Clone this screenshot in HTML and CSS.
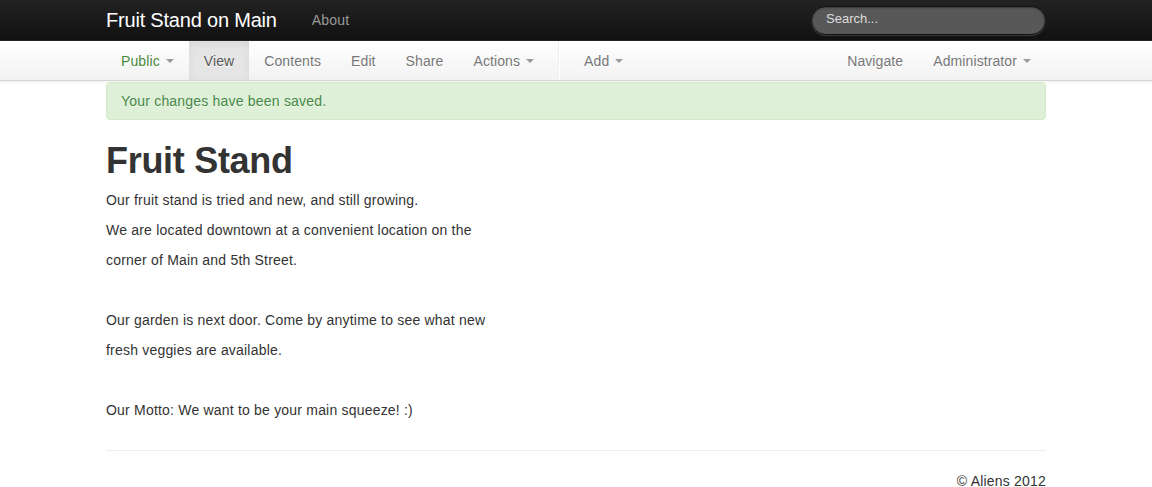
FILE: index.html
```html
<!DOCTYPE html>
<html lang="en">
<head>
<meta charset="utf-8">
<title>Fruit Stand</title>
<link rel="stylesheet" href="styles.css">
</head>
<body>
<div class="topbar">
  <div class="container topbar-row">
    <a class="brand" href="#">Fruit Stand on Main</a>
    <a class="top-link" href="#">About</a>
    <div class="spacer"></div>
    <input class="search" type="text" placeholder="Search...">
  </div>
</div>
<div class="subbar">
  <div class="container subbar-row">
    <ul class="nav">
      <li><a href="#" class="public">Public <b class="caret"></b></a></li>
      <li class="active"><a href="#">View</a></li>
      <li><a href="#">Contents</a></li>
      <li><a href="#">Edit</a></li>
      <li><a href="#">Share</a></li>
      <li><a href="#">Actions <b class="caret"></b></a></li>
      <li class="divider"></li>
      <li><a href="#">Add <b class="caret"></b></a></li>
    </ul>
    <ul class="nav nav-right">
      <li><a href="#">Navigate</a></li>
      <li><a href="#">Administrator <b class="caret"></b></a></li>
    </ul>
  </div>
</div>
<div class="container main">
  <div class="alert">Your changes have been saved.</div>
  <h1>Fruit Stand</h1>
  <div class="content">
    <p>Our fruit stand is tried and new, and still growing.<br>We are located downtown at a convenient location on the<br>corner of Main and 5th Street.</p>
    <p>Our garden is next door. Come by anytime to see what new<br>fresh veggies are available.</p>
    <p>Our Motto: We want to be your main squeeze! :)</p>
  </div>
  <hr class="rule">
  <footer class="footer">© Aliens 2012</footer>
</div>
</body>
</html>
```
FILE: styles.css
```css
* { box-sizing: border-box; }
html, body { margin: 0; padding: 0; }
body {
  font-family: "Liberation Sans", Arial, Helvetica, sans-serif;
  font-size: 14px;
  line-height: 20px;
  letter-spacing: 0.2px;
  color: #333;
  background: #fff;
  overflow: hidden;
}
a { text-decoration: none; }
.container { width: 940px; margin: 0 auto; }

.topbar {
  height: 41px;
  background: linear-gradient(#222, #111);
  border-bottom: 1px solid #252525;
}
.topbar-row { display: flex; align-items: flex-start; height: 40px; }
.brand {
  color: #fff;
  font-size: 20px;
  line-height: 20px;
  letter-spacing: -0.2px;
  padding: 10px 20px 10px 0;
}
.top-link { color: #999; font-size: 14px; padding: 10px 15px; }
.spacer { flex: 1; }
.search {
  width: 235px;
  height: 29px;
  margin-top: 6px;
  padding: 2px 14px 6px;
  border-radius: 15px;
  border: 1px solid #111;
  background: #585858;
  color: #ccc;
  font-family: "Liberation Sans", Arial, sans-serif;
  font-size: 13px;
  box-shadow: inset 0 1px 2px rgba(0,0,0,.35), 0 1px 0 rgba(255,255,255,.15);
  outline: none;
}
.search::placeholder { color: #ddd; }

.subbar {
  height: 40px;
  background: linear-gradient(#fff, #f2f2f2);
  border-bottom: 1px solid #d4d4d4;
  box-shadow: 0 1px 4px rgba(0,0,0,.07);
}
.subbar-row { display: flex; justify-content: space-between; height: 39px; }
.nav { list-style: none; margin: 0; padding: 0; display: flex; letter-spacing: 0.1px; }
.nav li a {
  display: block;
  padding: 10px 15px 9px;
  color: #777;
  text-shadow: 0 1px 0 #fff;
}
.nav li a.public { color: #4a8a3c; }
.nav li.active a {
  background: #e5e5e5;
  color: #555;
  box-shadow: inset 0 3px 8px rgba(0,0,0,.06);
}
.nav li.divider {
  width: 2px;
  height: 39px;
  margin: 0 9px;
  border-left: 1px solid #f0f0f0;
  border-right: 1px solid #fff;
}
.caret {
  display: inline-block;
  width: 0; height: 0;
  margin-left: 2px;
  vertical-align: top;
  margin-top: 8px;
  border-top: 4px solid #999;
  border-left: 4px solid transparent;
  border-right: 4px solid transparent;
}

.main { padding-top: 1px; }
.alert {
  margin-top: 0;
  padding: 8px 35px 8px 14px;
  background: #dff0d8;
  border: 1px solid #d6e9c6;
  border-radius: 4px;
  color: #468847;
  text-shadow: 0 1px 0 rgba(255,255,255,.5);
}
h1 {
  margin: 21px 0 4px;
  font-size: 36px;
  line-height: 40px;
  font-weight: bold;
  letter-spacing: -0.3px;
  color: #333;
}
.content { line-height: 30px; }
.content p { margin: 0 0 30px; }
.content p:last-child { margin-bottom: 0; }
.rule {
  margin: 25px 0 20px;
  border: 0;
  border-top: 1px solid #eee;
  height: 0;
}
.footer { text-align: right; line-height: 20px; }
```
